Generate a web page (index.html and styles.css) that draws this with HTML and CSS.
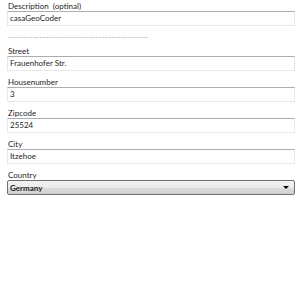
FILE: index.html
```html
<!DOCTYPE html>
<html lang="en">
<head>
    <meta charset="UTF-8">
    <title>casaGeoCoder</title>
    <link rel="stylesheet" href="styles.css">
</head>
<body>
    <div class="form">
        <div class="field">
            <label>Description&nbsp; (optinal)</label>
            <div class="input">casaGeoCoder</div>
        </div>

        <div class="separator">---------------------------------------------</div>

        <div class="field">
            <label>Street</label>
            <div class="input">Frauenhofer Str.</div>
        </div>

        <div class="field">
            <label>Housenumber</label>
            <div class="input">3</div>
        </div>

        <div class="field">
            <label>Zipcode</label>
            <div class="input">25524</div>
        </div>

        <div class="field">
            <label>City</label>
            <div class="input">Itzehoe</div>
        </div>

        <div class="field">
            <label>Country</label>
            <div class="select">
                <span>Germany</span>
                <span class="arrow"></span>
            </div>
        </div>
    </div>
</body>
</html>
```

FILE: styles.css
```css
body {
    margin: 0;
    background-color: white;
    font-family: "Lato", "Liberation Sans", sans-serif;
    font-size: 8px;
    color: #1e1e1e;
}

.form {
    padding: 1px 5px 0 7px;
}

.field {
    display: flex;
    flex-direction: column;
    margin-bottom: 6px;
}

.field label {
    line-height: 10px;
    height: 10px;
    padding-left: 1px;
}

.input {
    height: 13px;
    line-height: 13px;
    padding-left: 2px;
    border: 1px solid #e3e9ef;
    border-top-color: #abadb3;
    background-color: white;
}

.separator {
    color: #8fa3b8;
    letter-spacing: 0.15px;
    line-height: 10px;
    margin: 2px 0 4px 1px;
}

.select {
    display: flex;
    justify-content: space-between;
    align-items: center;
    height: 13px;
    padding: 0 5px 0 2px;
    border: 1px solid #707070;
    border-radius: 2px;
    background: linear-gradient(#f2f2f2, #ebebeb 50%, #dddddd 50%, #cfcfcf);
    font-weight: 700;
}

.arrow {
    width: 0;
    height: 0;
    border-left: 3px solid transparent;
    border-right: 3px solid transparent;
    border-top: 3px solid black;
}
```
